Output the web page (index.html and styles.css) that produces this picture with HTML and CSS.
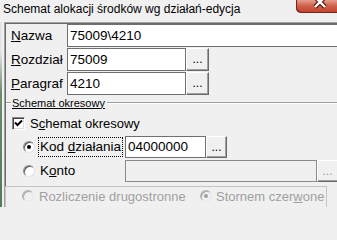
FILE: index.html
```html
<!DOCTYPE html>
<html lang="pl">
<head>
<meta charset="utf-8">
<title>Schemat alokacji</title>
<link rel="stylesheet" href="styles.css">
</head>
<body>
<div class="titlebar">
  <span class="title">Schemat alokacji środków wg działań-edycja</span>
  <div class="close">
    <svg width="41" height="13" viewBox="0 0 41 13"><path d="M19 -3 L29 7 M29 -3 L19 7" stroke="#5a1a12" stroke-width="4.6" fill="none"/><path d="M19 -3 L29 7 M29 -3 L19 7" stroke="#fff" stroke-width="2.4" fill="none"/></svg>
  </div>
</div>
<div class="main">
  <div class="edge"></div>
  <div class="panel">
    <div class="panel-in">
      <div class="row">
        <span class="lbl"><u>N</u>azwa</span>
        <div class="input wide">75009\4210</div>
      </div>
      <div class="row">
        <span class="lbl"><u>R</u>ozdział</span>
        <div class="input mid">75009</div>
        <div class="btn">...</div>
      </div>
      <div class="row">
        <span class="lbl"><u>P</u>aragraf</span>
        <div class="input mid">4210</div>
        <div class="btn">...</div>
      </div>
      <div class="legend"><span>Schemat okresowy</span></div>
      <div class="check-row">
        <span class="checkbox"><svg width="11" height="11" viewBox="0 0 11 11"><path d="M2 4.5 L4.5 7 L9 2.5" stroke="#000" stroke-width="2" fill="none"/></svg></span>
        <span>S<u>c</u>hemat okresowy</span>
      </div>
      <div class="radio-row kod">
        <span class="radio on"></span>
        <span class="rlbl focus">Kod <u>d</u>ziałania</span>
        <div class="input kod-in">04000000</div>
        <div class="btn small">...</div>
      </div>
      <div class="radio-row konto">
        <span class="radio"></span>
        <span class="rlbl">K<u>o</u>nto</span>
        <div class="input konto-in disabled"></div>
        <div class="btn small last disabled">...</div>
      </div>
      <div class="rozl">
        <span class="radio dis first"></span>
        <span class="dtext rozl-lbl">Rozliczenie drugostronne</span>
        <span class="radio dis on"></span>
        <span class="dtext storno">Stornem czer<u>w</u>one</span>
      </div>
    </div>
  </div>
</div>
</body>
</html>
```
FILE: styles.css
```css
* { box-sizing: border-box; }
html, body { margin: 0; padding: 0; }
body {
  width: 337px;
  height: 207px;
  overflow: hidden;
  background: #f0f0f0;
  font-family: "Liberation Sans", Arial, sans-serif;
  font-size: 13px;
  color: #000;
}
.titlebar {
  display: flex;
  align-items: flex-start;
  height: 22px;
  background: #f0f0f0;
}
.title {
  font-size: 12px;
  line-height: 19px;
  padding-left: 3px;
  white-space: nowrap;
}
.close {
  margin-left: auto;
  width: 41px;
  height: 13px;
  border-radius: 0 0 0 5px;
  background: linear-gradient(#e59f90, #d0604b 45%, #c0412b);
  box-shadow: inset 1px -1px #76261c;
  display: flex;
  overflow: hidden;
}
.main {
  display: flex;
  height: 185px;
}
.edge {
  width: 2px;
  background: linear-gradient(#e4e4e4 0, #e4e4e4 30px, #6d8d6d 70px, #557a55);
}
.panel {
  flex: 1;
  min-width: 0;
  margin-left: 2px;
  border-top: 1px solid #a0a0a0;
  border-left: 1px solid #a0a0a0;
  overflow: hidden;
}
.panel-in {
  height: 100%;
  border-top: 1px solid #696969;
  border-left: 1px solid #696969;
}
.row {
  display: flex;
  align-items: center;
  height: 23px;
  margin-bottom: 1px;
}
.lbl {
  width: 61px;
  flex: none;
  padding-left: 5px;
  font-size: 13.5px;
  white-space: nowrap;
}
.input {
  height: 23px;
  border: 1px solid #707070;
  background: #fff;
  padding-left: 2px;
  line-height: 21px;
  font-size: 13.5px;
  white-space: nowrap;
  flex: none;
}
.input.wide {
  flex: 1;
  border-right: none;
}
.input.mid { width: 119px; }
.btn {
  flex: none;
  width: 23px;
  height: 23px;
  background: #f0f0f0;
  border: 1px solid;
  border-color: #fff #696969 #696969 #fff;
  box-shadow: inset -1px -1px #a0a0a0;
  font-size: 12px;
  line-height: 21px;
  text-align: center;
  color: #000;
}
.btn.small { width: 21px; height: 22px; }
.btn.last { width: 20px; border-right: none; box-shadow: inset 0 -1px #a0a0a0; }
.btn.disabled { color: #a0a0a0; }
.legend {
  display: flex;
  align-items: center;
  height: 13px;
  font-size: 11px;
  white-space: nowrap;
}
.legend::before,
.legend::after {
  content: "";
  border-top: 1px solid #a0a0a0;
  border-bottom: 1px solid #fff;
}
.legend::before { width: 5px; }
.legend::after { flex: 1; }
.legend span {
  text-decoration: underline;
  padding: 0 2px 0 1px;
}
.check-row {
  display: flex;
  align-items: center;
  height: 16px;
  margin-top: 6px;
  padding-left: 6px;
  white-space: nowrap;
}
.checkbox {
  width: 13px;
  height: 13px;
  margin-right: 5px;
  background: #fff;
  border: 1px solid;
  border-color: #8a8a8a #fff #fff #8a8a8a;
  box-shadow: inset 1px 1px #404040, inset -1px -1px #dcdcdc;
  display: flex;
  align-items: center;
  justify-content: center;
}
.radio-row {
  display: flex;
  align-items: center;
  height: 22px;
}
.radio-row.kod { margin-top: 5px; }
.radio-row.konto { margin-top: 2px; }
.radio {
  flex: none;
  width: 12px;
  height: 12px;
  border-radius: 50%;
  background: #fff;
  border: 1px solid;
  border-color: #8a8a8a #e2e2e2 #e2e2e2 #8a8a8a;
  box-shadow: inset 1px 1px #5a5a5a;
  display: flex;
  align-items: center;
  justify-content: center;
}
.radio-row .radio { margin-left: 17px; margin-right: 3px; }
.radio.on::after {
  content: "";
  width: 4px;
  height: 4px;
  border-radius: 50%;
  background: #000;
}
.radio.dis {
  background: #f0f0f0;
  border-color: #b4b4b4 #e8e8e8 #e8e8e8 #b4b4b4;
  box-shadow: inset 1px 1px #a8a8a8;
}
.radio.dis.on::after { background: #a0a0a0; }
.rlbl {
  flex: none;
  width: 85px;
  height: 20px;
  line-height: 18px;
  padding-left: 1px;
  border: 1px dotted transparent;
  font-size: 13.5px;
  white-space: nowrap;
}
.rlbl.focus { border-color: #000; }
.kod-in { margin-left: 2px; width: 81px; height: 22px; line-height: 20px; }
.konto-in { margin-left: 2px; width: 192px; height: 22px; }
.input.disabled {
  background: #f0f0f0;
  border-color: #8a8a8a;
}
.rozl {
  display: flex;
  align-items: center;
  margin-top: 4px;
  margin-left: -1px;
  width: 322px;
  height: 30px;
  padding-bottom: 10px;
  border: 1px solid #c4c4c4;
  white-space: nowrap;
}
.rozl .first { margin-left: 16px; }
.dtext { color: #a0a0a0; font-size: 13px; }
.rozl-lbl { width: 158px; margin-left: 5px; margin-right: 3px; overflow: hidden; }
.storno { margin-left: 4px; }
```
